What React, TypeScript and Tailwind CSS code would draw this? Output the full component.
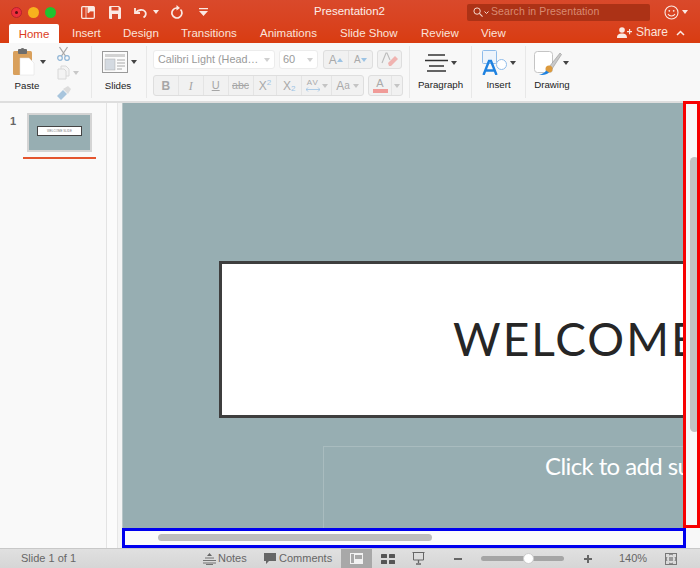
import React from "react";

const Caret = ({ c = "#444" }: { c?: string }) => (
  <svg width="6" height="4" viewBox="0 0 6 4" className="shrink-0"><path d="M0 0h6L3 4z" fill={c} /></svg>
);

const Label = ({ children }: { children: React.ReactNode }) => (
  <div className="text-[9.7px] leading-[12px] text-[#222] text-center whitespace-nowrap">{children}</div>
);

const Sep = () => <div className="w-px h-[52px] bg-[#e8e8e8] shrink-0 self-center" />;

const Tab = ({ w, children }: { w: string; children: string }) => (
  <div className={`${w} text-[11.5px] leading-[20px] text-[#fbe3da] whitespace-nowrap`}>{children}</div>
);

const Btn = ({ w, last, children }: { w: string; last?: boolean; children: React.ReactNode }) => (
  <div className={`${w} h-full flex items-center justify-center ${last ? "" : "border-r border-[#e4e4e4]"}`}>{children}</div>
);

export default function App() {
  return (
    <div className="relative w-[700px] h-[568px] overflow-hidden flex flex-col bg-white" style={{ fontFamily: '"Liberation Sans", Arial, sans-serif' }}>
      {/* Title + tabs */}
      <div className="h-[43px] shrink-0 flex flex-col bg-gradient-to-b from-[#d9492b] to-[#d93c10]">
        <div className="h-[24px] flex items-center pl-[11px]">
          <div className="w-[11px] h-[11px] rounded-full bg-[#ee2f3c] border border-[#b5242c] flex items-center justify-center"><div className="w-[3px] h-[3px] rounded-full bg-[#5c0f12]" /></div>
          <div className="w-[11px] h-[11px] rounded-full bg-[#f7b21d] ml-[6px]" />
          <div className="w-[11px] h-[11px] rounded-full bg-[#1fc32f] ml-[6px]" />
          <svg width="14" height="13" viewBox="0 0 14 13" className="ml-[25px]" fill="none"><rect x=".7" y=".7" width="12.6" height="11.6" rx="1" stroke="#fbe9e3" strokeWidth="1.3" /><path d="M5 1v11M7 1h6v4H9.500L7 7z" stroke="#fbe9e3" fill="#fbe9e3" strokeWidth=".8" /></svg>
          <svg width="12" height="13" viewBox="0 0 12 13" className="ml-[14px]"><path d="M0 1a1 1 0 0 1 1-1h9l2 2v10a1 1 0 0 1-1 1H1a1 1 0 0 1-1-1z" fill="#fbe9e3" /><rect x="2.5" y="1" width="7" height="3.5" fill="#d9492b" /><rect x="3" y="8" width="6" height="5" fill="#d9492b" /></svg>
          <svg width="14" height="11" viewBox="0 0 14 11" className="ml-[13px]" fill="none"><path d="M1 1v5h5" stroke="#fbe9e3" strokeWidth="1.8" /><path d="M1.500 6C4 2.500 9 2 11 4.500c1.500 2 .8 4.500-1.500 6" stroke="#fbe9e3" strokeWidth="1.8" /></svg>
          <div className="ml-[5px]"><Caret c="#fbe9e3" /></div>
          <svg width="13" height="14" viewBox="0 0 13 14" className="ml-[11px]" fill="none"><path d="M10.500 4.500A5 5 0 1 1 6.500 3H8" stroke="#fbe9e3" strokeWidth="1.700" /><path d="M6.500 0l3.500 3-3.500 2.500z" fill="#fbe9e3" /></svg>
          <svg width="9" height="8" viewBox="0 0 9 8" className="ml-[16px]"><path d="M0 0h9v1.200H0zM0 3h9L4.500 8z" fill="#fbe9e3" /></svg>
          <div className="w-[104px] ml-[106px] text-[11.5px] text-[#fdeee9] whitespace-nowrap text-left">Presentation2</div>
          <div className="w-[183px] h-[17px] ml-[49px] rounded-[2px] bg-[#ac3216] flex items-center pl-[6px]">
            <svg width="10" height="10" viewBox="0 0 11 11" fill="none"><circle cx="4.500" cy="4.500" r="3.500" stroke="#f5d8ce" strokeWidth="1.100" /><path d="M7 7l3.500 3.500" stroke="#f5d8ce" strokeWidth="1.200" /></svg>
            <svg width="5" height="3" viewBox="0 0 5 3" className="ml-[1px]" fill="none"><path d="M.5.500l2 2 2-2" stroke="#f5d8ce" /></svg>
            <span className="ml-[2px] text-[10.5px] text-[#d98a72] whitespace-nowrap tracking-[0.1px]">Search in Presentation</span>
          </div>
          <svg width="15" height="15" viewBox="0 0 15 15" className="ml-[14px]" fill="none"><circle cx="7.500" cy="7.500" r="6.500" stroke="#fbe9e3" strokeWidth="1.100" /><circle cx="5.300" cy="5.800" r=".9" fill="#fbe9e3" /><circle cx="9.700" cy="5.800" r=".9" fill="#fbe9e3" /><path d="M4 9c1.500 2.600 5.500 2.600 7 0" stroke="#fbe9e3" strokeWidth="1.100" /></svg>
          <div className="ml-[3px]"><Caret c="#fbe9e3" /></div>
        </div>
        <div className="h-[19px] flex items-end pl-[9px]">
          <div className="w-[50px] h-[19px] bg-white rounded-t-[2px] text-[11.5px] leading-[20px] text-center text-[#dc3c1c] mr-[13px]">Home</div>
          <Tab w="w-[51px]">Insert</Tab>
          <Tab w="w-[58px]">Design</Tab>
          <Tab w="w-[79px]">Transitions</Tab>
          <Tab w="w-[80px]">Animations</Tab>
          <Tab w="w-[81px]">Slide Show</Tab>
          <Tab w="w-[60px]">Review</Tab>
          <Tab w="w-[136px]">View</Tab>
          <svg width="15" height="11" viewBox="0 0 15 11" className="mb-[5px] mr-[4px]" fill="#fbe9e3"><circle cx="5" cy="3" r="2.800" /><path d="M0 11c0-3.500 2-4.500 5-4.500s5 1 5 4.500zM10 4h2V2h1.200v2H15v1.200h-1.800v2H12v-2h-2z" /></svg>
          <div className="w-[40px] text-[12px] leading-[20px] text-[#fbe3da] mb-[1px]">Share</div>
          <svg width="9" height="6" viewBox="0 0 9 6" className="mb-[7px]" fill="none"><path d="M1 5l3.500-3.500L8 5" stroke="#fbe9e3" strokeWidth="1.500" /></svg>
        </div>
      </div>

      {/* Ribbon */}
      <div className="h-[60px] shrink-0 flex bg-[#f8f8f8] border-b-2 border-[#dedede] pl-[9px]">
        {/* Paste */}
        <div className="w-[44px] flex flex-col items-start shrink-0 pt-[4px]">
          <div className="h-[29px] flex items-center ml-[4px]">
            <svg width="22" height="28" viewBox="0 0 22 28"><rect x="0" y="3" width="19" height="24" rx="1.500" fill="#d9a05c" /><rect x="5" y="1" width="9" height="5" rx="1" fill="#6d6d6d" /><circle cx="9.500" cy="2" r="2" fill="#6d6d6d" /><path d="M7 10h9l5 5v12H7z" fill="#fff" stroke="#ddd" strokeWidth=".5" /></svg>
            <div className="ml-[5px]"><Caret /></div>
          </div>
          <div className="w-[36px] mt-[4px]"><Label>Paste</Label></div>
        </div>
        {/* Clipboard small */}
        <div className="w-[38px] flex flex-col items-start shrink-0 pl-[4px] pt-[3px]">
          <svg width="13" height="15" viewBox="0 0 13 15" fill="none"><path d="M2.500 1l6 9M10.500 1l-6 9" stroke="#a9a9a9" strokeWidth="1.300" /><circle cx="3" cy="12" r="2.300" stroke="#8fb5d6" strokeWidth="1.200" /><circle cx="10" cy="12" r="2.300" stroke="#8fb5d6" strokeWidth="1.200" /></svg>
          <div className="flex items-center mt-[4px]">
            <svg width="13" height="15" viewBox="0 0 13 15" fill="none"><path d="M4 1h5l3 3v7H4z" stroke="#d8d8d8" fill="#f3f3f3" /><path d="M1 4h6l2 2v8H1z" stroke="#d8d8d8" fill="#f3f3f3" /></svg>
            <div className="ml-[3px]"><Caret c="#c8c8c8" /></div>
          </div>
          <svg width="14" height="14" viewBox="0 0 14 14" className="mt-[6px]"><path d="M6 3l5-3 3 3-3 5z" fill="#dcdcdc" /><path d="M0 10l6-6 4 4-6 6z" fill="#a8c5dd" /></svg>
        </div>
        <Sep />
        {/* Slides */}
        <div className="w-[54px] flex flex-col shrink-0 pl-[10px] pt-[8px]">
          <div className="h-[22px] flex items-center">
            <svg width="26" height="22" viewBox="0 0 26 22" fill="none"><rect x=".5" y=".5" width="25" height="21" fill="#fbfbfb" stroke="#9a9a9a" /><rect x="3" y="3" width="20" height="3" fill="#d2d2d2" /><rect x="3" y="8" width="10" height="11" fill="#d4dae1" stroke="#aaa" strokeWidth=".5" /><path d="M15 9h8M15 12h8M15 15h8M15 18h5" stroke="#aaa" /></svg>
            <div className="ml-[3px]"><Caret /></div>
          </div>
          <div className="w-[32px] mt-[7px]"><Label>Slides</Label></div>
        </div>
        <Sep />
        {/* Font */}
        <div className="w-[262px] shrink-0 flex flex-col pl-[6px] pt-[7px] text-[#a9a9a9]">
          <div className="flex h-[19px]">
            <div className="w-[122px] h-full rounded-[3px] bg-white border border-[#ececec] flex items-center justify-between pl-[4px] pr-[4px]">
              <span className="text-[10.8px] text-[#9a9a9a] whitespace-nowrap">Calibri Light (Head…</span>
              <Caret c="#d0d0d0" />
            </div>
            <div className="w-[39px] h-full ml-[4px] rounded-[3px] bg-white border border-[#ececec] flex items-center justify-between pl-[3px] pr-[4px]">
              <span className="text-[11px] text-[#9a9a9a]">60</span>
              <Caret c="#d0d0d0" />
            </div>
            <div className="w-[50px] h-full ml-[5px] rounded-[3px] bg-[#f1f1f1] border border-[#dedede] flex items-center">
              <Btn w="w-[25px]"><span className="text-[12px]">A</span><svg width="6" height="4" viewBox="0 0 6 4"><path d="M0 4h6L3 0z" fill="#9cc3e4" /></svg></Btn>
              <Btn w="w-[24px]" last><span className="text-[10px]">A</span><svg width="6" height="4" viewBox="0 0 6 4"><path d="M0 0h6L3 4z" fill="#9cc3e4" /></svg></Btn>
            </div>
            <div className="w-[25px] h-full ml-[4px] rounded-[3px] bg-[#f1f1f1] border border-[#dedede] flex items-center justify-center relative">
              <svg width="18" height="15" viewBox="0 0 18 15"><path d="M1 11L5 1h1l3 7" stroke="#bbb" strokeWidth="1.100" fill="none" /><path d="M7 11l7-7 3 3-7 7H8z" fill="#f0b3b0" /></svg>
            </div>
          </div>
          <div className="flex h-[21px] mt-[6px]">
            <div className="w-[211px] h-full rounded-[3px] bg-[#f1f1f1] border border-[#dedede] flex items-center text-[11px]">
              <Btn w="w-[25px]"><span className="font-bold text-[12px] text-[#a6a6a6]">B</span></Btn>
              <Btn w="w-[25px]"><span className="italic text-[12px] text-[#a6a6a6]" style={{ fontFamily: '"Liberation Serif", serif' }}>I</span></Btn>
              <Btn w="w-[25px]"><span className="underline text-[11px] text-[#a6a6a6]">U</span></Btn>
              <Btn w="w-[25px]"><span className="line-through text-[10.5px] text-[#a6a6a6]">abc</span></Btn>
              <Btn w="w-[24px]"><span className="text-[12px]">X</span><span className="text-[8px] text-[#9cc3e4] mb-[6px]">2</span></Btn>
              <Btn w="w-[25px]"><span className="text-[12px]">X</span><span className="text-[8px] text-[#9cc3e4] mt-[7px]">2</span></Btn>
              <Btn w="w-[30px]">
                <div className="flex flex-col items-center leading-[8px] mr-[2px]"><span className="text-[8px] tracking-[1px]">AV</span><svg width="14" height="5" viewBox="0 0 14 5" fill="none"><path d="M0 2.500h14M2 .5l-2 2 2 2M12 .5l2 2-2 2" stroke="#9cc3e4" strokeWidth=".8" /></svg></div>
                <Caret c="#c4c4c4" />
              </Btn>
              <Btn w="w-[31px]" last><span className="text-[12px]">A</span><span className="text-[10px] mr-[3px]">a</span><Caret c="#c4c4c4" /></Btn>
            </div>
            <div className="w-[35px] h-full ml-[4px] rounded-[3px] bg-[#f1f1f1] border border-[#dedede] flex items-center">
              <Btn w="w-[23px]"><div className="flex flex-col items-center"><span className="text-[11px] leading-[11px]">A</span><div className="w-[15px] h-[4px] bg-[#f09b98]" /></div></Btn>
              <Btn w="w-[10px]" last><Caret c="#c4c4c4" /></Btn>
            </div>
          </div>
        </div>
        <Sep />
        {/* Paragraph */}
        <div className="w-[61px] shrink-0 flex flex-col items-center pt-[10px]">
          <div className="h-[19px] flex items-center">
            <svg width="23" height="18" viewBox="0 0 23 18" fill="none" stroke="#333" strokeWidth="1.300"><path d="M3 1h17M0 6.500h23M4 12h15M2 17h19" /></svg>
            <div className="ml-[3px]"><Caret /></div>
          </div>
          <div className="mt-[7px]"><Label>Paragraph</Label></div>
        </div>
        <Sep />
        {/* Insert */}
        <div className="w-[53px] shrink-0 flex flex-col pl-[10px] pt-[7px]">
          <div className="h-[25px] flex items-center">
            <svg width="25" height="25" viewBox="0 0 25 25" fill="none"><rect x=".5" y=".5" width="14" height="13" rx="1" fill="#eef4fb" stroke="#8fbcea" /><circle cx="19.500" cy="14.500" r="5" fill="#fff" stroke="#8fbcea" /><path d="M1.500 25L7 11h2l5.500 14M4 20.500h8" stroke="#1f82e0" strokeWidth="2.400" /></svg>
            <div className="ml-[3px]"><Caret /></div>
          </div>
          <div className="w-[33px] mt-[4px]"><Label>Insert</Label></div>
        </div>
        <Sep />
        {/* Drawing */}
        <div className="w-[60px] shrink-0 flex flex-col pl-[8px] pt-[8px]">
          <div className="h-[24px] flex items-center">
            <svg width="28" height="24" viewBox="0 0 28 24" fill="none"><rect x=".5" y=".5" width="18" height="21" rx="3" fill="#fff" stroke="#c4c4c4" /><path d="M15 16L26 2l1.500 1.500L18 18z" fill="#c9c9c9" stroke="#888" strokeWidth=".5" /><circle cx="15" cy="18" r="3.500" fill="#dc9a3e" /><path d="M5 23.500c4-.5 6-2 7-4l3 2c-2 2-6 3-10 2z" fill="#1f82e0" /></svg>
            <div className="ml-[1px]"><Caret /></div>
          </div>
          <div className="w-[36px] mt-[4px]"><Label>Drawing</Label></div>
        </div>
      </div>

      {/* Body */}
      <div className="flex-1 flex min-h-0">
        <div className="w-[107px] shrink-0 bg-[#f9f9f9] border-r border-[#e3e3e3] pl-[10px] pt-[10px] flex">
          <div className="w-[17px] text-[11px] leading-[16px] font-bold text-[#666]">1</div>
          <div className="flex flex-col">
            <div className="w-[65px] h-[39px] border-2 border-[#d4d4d4] bg-[#97aeb2] flex items-center pl-[8px]">
              <div className="w-[45px] h-[10px] bg-white border border-[#444] flex items-center justify-center mb-[3px]"><span className="text-[3px] leading-[3px] text-[#777] whitespace-nowrap">WELCOME SLIDE</span></div>
            </div>
            <div className="w-[73px] h-[2px] bg-[#e4552f] mt-[5px] -ml-[4px]" />
          </div>
        </div>
        <div className="w-[11px] shrink-0 bg-[#fbfbfb] border-r border-[#e6e6e6]" />
        <div className="w-[4px] shrink-0 bg-[#f4f4f4]" />
        <div className="flex-1 flex flex-col min-w-0">
          <div className="h-[425px] bg-[#97aeb2] overflow-hidden relative border-l border-[#b8c6c8]">
            <div className="absolute left-[96px] top-[158px] w-[700px] h-[157px] bg-white border-[3.500px] border-[#3e3e3e]">
              <span className="absolute left-[231px] top-[47px] text-[46px] leading-[56px] tracking-[2px] text-[#262626] whitespace-nowrap" style={{ fontFamily: 'Lato, sans-serif' }}>WELCOME</span>
            </div>
            <div className="absolute left-[200px] top-[343px] w-[600px] h-[120px] border border-[#a9bcbf]">
              <span className="absolute left-[221px] top-[3px] text-[24px] leading-[32px] tracking-[-0.600px] text-white whitespace-nowrap" style={{ fontFamily: 'Lato, sans-serif' }}>Click to add subtitle</span>
            </div>
          </div>
          <div className="flex-1 bg-[#fbfbfb] flex items-center pl-[36px] border-b border-[#e6e6e6]">
            <div className="w-[274px] h-[7px] rounded-full bg-[#bdbdbd]" />
          </div>
        </div>
        <div className="w-[15px] shrink-0 bg-[#f8f8f8] border-l border-[#ececec] pt-[54px] pl-[4px]">
          <div className="w-[9px] h-[275px] rounded-full bg-[#c2c2c2]" />
        </div>
      </div>

      {/* Status */}
      <div className="h-[20px] shrink-0 bg-gradient-to-b from-[#e0e0e0] to-[#d6d6d6] border-t border-[#c8c8c8] flex items-center pl-[21px] text-[11px] text-[#666]">
        <span className="w-[182px] whitespace-nowrap">Slide 1 of 1</span>
        <svg width="13" height="12" viewBox="0 0 13 12" fill="none" stroke="#666"><path d="M6.500 0L9 3H4z" fill="#666" stroke="none" /><path d="M2 5h9M0 7.500h13M0 10h13M3 11.500h7" strokeWidth=".9" /></svg>
        <span className="ml-[2px] w-[46px]">Notes</span>
        <svg width="12" height="11" viewBox="0 0 12 11" fill="#666"><path d="M0 0h12v8H5l-3 3V8H0z" /></svg>
        <span className="ml-[3px] w-[62px] whitespace-nowrap">Comments</span>
        <div className="w-[31px] h-[19px] bg-[#a8a8a8] flex items-center justify-center">
          <svg width="13" height="11" viewBox="0 0 13 11"><rect width="13" height="11" fill="#f2f2f2" /><rect x="1" y="1" width="3" height="9" fill="#a8a8a8" /><rect x="5" y="2" width="7" height="4" fill="#a8a8a8" /></svg>
        </div>
        <svg width="14" height="10" viewBox="0 0 14 10" fill="#555" className="ml-[9px]"><rect width="6" height="4" rx=".5" /><rect x="8" width="6" height="4" rx=".5" /><rect y="6" width="6" height="4" rx=".5" /><rect x="8" y="6" width="6" height="4" rx=".5" /></svg>
        <svg width="13" height="13" viewBox="0 0 13 13" fill="none" stroke="#666" className="ml-[17px]"><path d="M.5.5h12M1.500 1v7h10V1" /><path d="M6.500 8v3M4 12h5" strokeWidth="1.300" /></svg>
        <div className="w-[8px] h-[2px] bg-[#666] ml-[29px]" />
        <div className="relative w-[83px] h-[5px] ml-[19px] rounded-full bg-[#a5a5a5]">
          <div className="absolute left-[42px] top-[-3px] w-[11px] h-[11px] rounded-full bg-white border border-[#ccc]" />
        </div>
        <svg width="8" height="8" viewBox="0 0 8 8" fill="#666" className="ml-[20px]"><path d="M3 0h2v3h3v2H5v3H3V5H0V3h3z" /></svg>
        <span className="ml-[27px] w-[46px] text-[11px]">140%</span>
        <svg width="12" height="12" viewBox="0 0 12 12" fill="none" stroke="#777"><rect x=".5" y=".5" width="11" height="11" /><path d="M4 2l2-1 2 1M4 10l2 1 2-1M2 4l-1 2 1 2M10 4l1 2-1 2" /><rect x="4" y="4" width="4" height="4" stroke="none" fill="#999" /></svg>
      </div>

      {/* Annotations */}
      <div className="absolute left-[683px] top-[101px] w-[17px] h-[427px] border-[3px] border-[#f70000]" />
      <div className="absolute left-[122px] top-[528px] w-[564px] h-[20px] border-[3px] border-[#0000ee]" />
    </div>
  );
}
